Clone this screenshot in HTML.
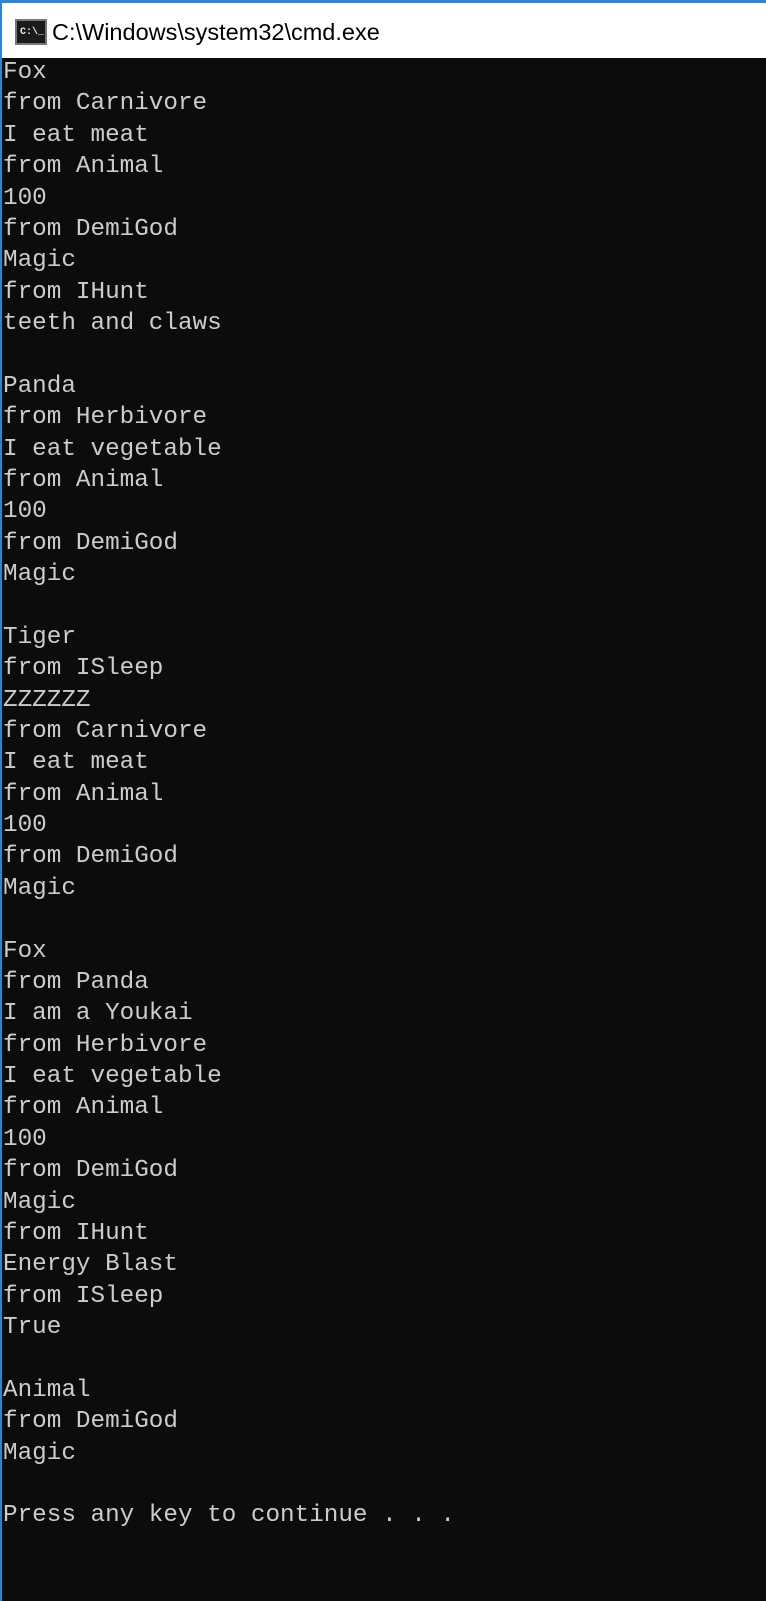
<!DOCTYPE html>
<html><head><meta charset="utf-8"><style>
html,body{margin:0;padding:0;width:766px;height:1601px;overflow:hidden;background:#0c0c0c;}
.top{position:absolute;left:0;top:0;width:766px;height:3px;background:#2b84d8;}
.bar{position:absolute;left:0;top:3px;width:766px;height:55px;background:#fff;}
.lb{position:absolute;left:0;top:0;width:2px;height:1601px;background:#2b84d8;}
.icon{position:absolute;left:15px;top:16px;width:32px;height:26px;background:#1a1a1a;border:2px solid #777;box-sizing:border-box;}
.icon span{position:absolute;left:3px;top:6px;font:bold 10px "Liberation Mono",monospace;color:#eee;}
.title{position:absolute;left:52px;top:16px;font:23.5px "Liberation Sans",sans-serif;color:#000;}
pre{position:absolute;left:3px;top:57px;margin:0;font:24.3px/31.37px "Liberation Mono",monospace;color:#cccccc;}
</style></head><body>
<div class="top"></div>
<div class="bar"><div class="icon"><span>C:\_</span></div><div class="title">C:\Windows\system32\cmd.exe</div></div>
<div class="lb"></div>
<pre>Fox
from Carnivore
I eat meat
from Animal
100
from DemiGod
Magic
from IHunt
teeth and claws

Panda
from Herbivore
I eat vegetable
from Animal
100
from DemiGod
Magic

Tiger
from ISleep
ZZZZZZ
from Carnivore
I eat meat
from Animal
100
from DemiGod
Magic

Fox
from Panda
I am a Youkai
from Herbivore
I eat vegetable
from Animal
100
from DemiGod
Magic
from IHunt
Energy Blast
from ISleep
True

Animal
from DemiGod
Magic

Press any key to continue . . .</pre>
</body></html>
